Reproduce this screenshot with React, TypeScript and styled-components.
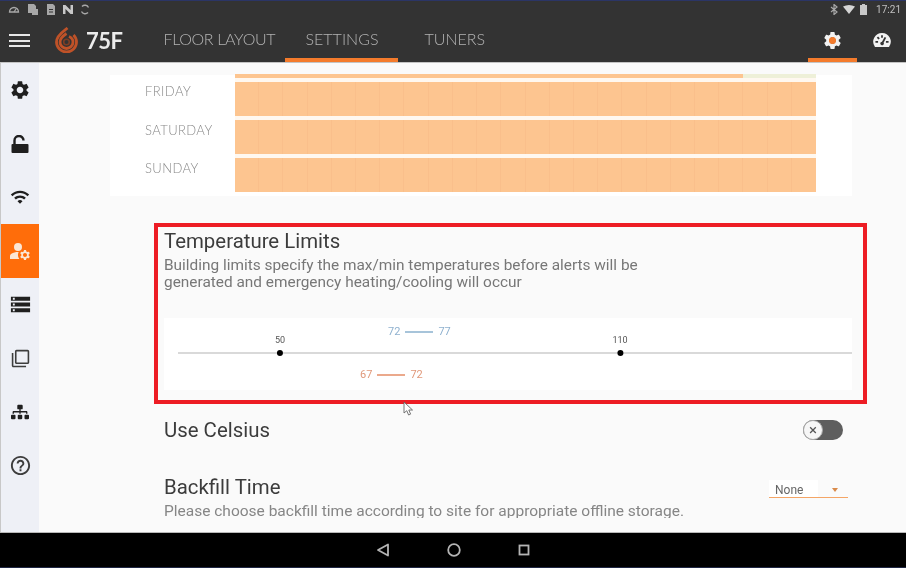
import styled, { createGlobalStyle } from 'styled-components';
import {
    MdSettings,
    MdWifi,
    MdManageAccounts,
    MdStorage,
    MdFilterNone,
    MdHelpOutline,
} from 'react-icons/md';
import { FaSitemap } from 'react-icons/fa';

const GlobalStyle = createGlobalStyle`
    html, body {
        margin: 0;
        padding: 0;
        background: #fafafa;
    }
    * {
        box-sizing: border-box;
    }
`;

const hours = Array.from({ length: 24 }, (_, i) => i);

function HourGrid() {
    return (
        <>
            {hours.map(h => <HourCell key={h} />)}
        </>
    );
}

function StatusIcons() {
    return (
        <StatusLeft>
            <svg width="12" height="10" viewBox="0 0 12 10" fill="none" stroke="#a8a8a8" strokeWidth="1.3">
                <path d="M1.5 8a4.5 4.5 0 1 1 9 0z" />
                <path d="M6 8l2-3" />
            </svg>
            <svg width="12" height="11" viewBox="0 0 12 11" fill="#a8a8a8">
                <path d="M1 0h6l2 2v3h2v6H5V9H1z" />
            </svg>
            <svg width="10" height="11" viewBox="0 0 10 11" fill="#a8a8a8">
                <path d="M1 0h6l2 2v9H1zM3 5v1h4V5zM3 7.500v1h4v-1z" fillRule="evenodd" />
            </svg>
            <svg width="10" height="9" viewBox="0 0 10 9" fill="#c8c8c8">
                <path d="M0 0h2.500l5 5V0H10v9H7.500l-5-5v5H0z" />
            </svg>
            <svg width="10" height="11" viewBox="0 0 10 11" fill="none" stroke="#a8a8a8" strokeWidth="1.4">
                <path d="M8.500 3.500A4 4 0 0 0 2 2.500M1.500 7.500A4 4 0 0 0 8 8.500" />
            </svg>
        </StatusLeft>
    );
}

function Logo() {
    return (
        <LogoWrap>
            <svg width="23" height="26" viewBox="0 0 23 26" fill="none" stroke="#bf5228">
                <path d="M12.500 1C9 4 1.500 8 1.500 15a10 10 0 0 0 20 0c0-3-1-5-3-7" strokeWidth="2.800" />
                <path d="M11.500 6.500C8.500 8.500 5 11 5 15a6.500 6.500 0 0 0 13 0c0-2.500-1.500-4.500-4-5.500" strokeWidth="2.800" />
                <circle cx="11.500" cy="15" r="2.800" strokeWidth="1.600" stroke="#7d3d24" />
            </svg>
            <LogoText>75F</LogoText>
        </LogoWrap>
    );
}

function Gauge() {
    return (
        <svg width="18" height="14" viewBox="0 0 20 16">
            <path
                d="M10 0a10 10 0 0 0-8 16h16A10 10 0 0 0 10 0zM9 2.500h2v3H9zM4 5.500l1.500-1.500 2 2L6 7.500zM2.500 9h3v2h-3zM14.500 9h3v2h-3zM13 4.500l1.800 1-3 5.500a2 2 0 1 1-1.800-1z"
                fill="#f2f2f2"
                fillRule="evenodd"
            />
        </svg>
    );
}

function OpenLock() {
    return (
        <svg width="18" height="18" viewBox="0 0 18 18" fill="none">
            <path d="M3.500 9V5.500a4.500 4.500 0 0 1 9 0" stroke="#1f1f1f" strokeWidth="2.400" />
            <rect x="0.500" y="9" width="17" height="9" rx="1" fill="#1f1f1f" />
        </svg>
    );
}

function App() {
    return (
        <Screen>
            <GlobalStyle />
            <StatusBar>
                <StatusIcons />
                <StatusRight>
                    <svg width="8" height="11" viewBox="0 0 8 11" fill="none" stroke="#a8a8a8" strokeWidth="1.200">
                        <path d="M1 3l6 5-3 2.500V.5L7 3 1 8" />
                    </svg>
                    <svg width="12" height="9" viewBox="0 0 12 9" fill="#d5d5d5">
                        <path d="M0 1.500Q6-1.500 12 1.500L6 9z" />
                    </svg>
                    <svg width="7" height="11" viewBox="0 0 7 11" fill="#c8c8c8">
                        <path d="M2 0h3v1h2v10H0V1h2z" />
                    </svg>
                    <Clock>17:21</Clock>
                </StatusRight>
            </StatusBar>

            <TopNav>
                <Hamburger>
                    <span />
                    <span />
                    <span />
                </Hamburger>
                <Logo />
                <Tabs>
                    <Tab $width={122} $tight>FLOOR LAYOUT</Tab>
                    <Tab $width={113} $active>SETTINGS</Tab>
                    <Tab $width={112} $offset={12}>TUNERS</Tab>
                </Tabs>
                <NavIcons>
                    <NavIcon $active>
                        <MdSettings size={21} color="#f2f2f2" />
                        <GearDot />
                    </NavIcon>
                    <NavIcon>
                        <Gauge />
                    </NavIcon>
                </NavIcons>
            </TopNav>

            <Body>
                <SideBar>
                    <SideItem><MdSettings size={22} /></SideItem>
                    <SideItem><OpenLock /></SideItem>
                    <SideItem><MdWifi size={20} /></SideItem>
                    <SideItem $active><MdManageAccounts size={24} /></SideItem>
                    <SideItem><MdStorage size={23} /></SideItem>
                    <SideItem $muted><MdFilterNone size={19} /></SideItem>
                    <SideItem><FaSitemap size={18} /></SideItem>
                    <SideItem $muted><MdHelpOutline size={23} /></SideItem>
                </SideBar>

                <Main>
                    <ScheduleCard>
                        <DayLabels>
                            <DayLabel>FRIDAY</DayLabel>
                            <DayLabel>SATURDAY</DayLabel>
                            <DayLabel>SUNDAY</DayLabel>
                        </DayLabels>
                        <Chart>
                            <PartialBar>
                                <PartialFill />
                            </PartialBar>
                            <Gap />
                            <DayBar><HourGrid /></DayBar>
                            <Gap />
                            <DayBar><HourGrid /></DayBar>
                            <Gap />
                            <DayBar><HourGrid /></DayBar>
                        </Chart>
                    </ScheduleCard>

                    <Section>
                        <Title>Temperature Limits</Title>
                        <Description>
                            Building limits specify the max/min temperatures before alerts will be<br />
                            generated and emergency heating/cooling will occur
                        </Description>
                        <SliderCard>
                            <RangeLabel $color="#8fb1cf" $left={224} $top={7}>
                                72<RangeDash $color="#a7c4da" />77
                            </RangeLabel>
                            <SliderMark $left={116}>50</SliderMark>
                            <SliderMark $left={456}>110</SliderMark>
                            <SliderTrack />
                            <RangeLabel $color="#e0987a" $left={196} $top={50}>
                                67<RangeDash $color="#eba98c" />72
                            </RangeLabel>
                        </SliderCard>

                        <CelsiusRow>
                            <Title>Use Celsius</Title>
                            <Toggle>
                                <ToggleKnob>×</ToggleKnob>
                            </Toggle>
                        </CelsiusRow>

                        <BackfillRow>
                            <Title>Backfill Time</Title>
                            <Select>
                                <span>None</span>
                                <SelectCaret />
                            </Select>
                        </BackfillRow>
                        <BackfillHint>Please choose backfill time according to site for appropriate offline storage.</BackfillHint>
                    </Section>
                </Main>
            </Body>

            <BottomBar>
                <svg width="14" height="14" viewBox="0 0 14 14" fill="none" stroke="#b4b4b4" strokeWidth="1.800">
                    <path d="M12 1.500v11L2 7z" strokeLinejoin="round" />
                </svg>
                <svg width="14" height="14" viewBox="0 0 14 14" fill="none" stroke="#b4b4b4" strokeWidth="1.800">
                    <circle cx="7" cy="7" r="5.800" />
                </svg>
                <svg width="12" height="12" viewBox="0 0 12 12" fill="none" stroke="#b4b4b4" strokeWidth="1.800">
                    <rect x="1.500" y="1.500" width="9" height="9" />
                </svg>
            </BottomBar>

            <Highlight />
            <Cursor>
                <svg width="12" height="16" viewBox="0 0 12 16" fill="#fff" stroke="#666" strokeWidth="0.900">
                    <path d="M1 1v11l2.800-2.300 1.800 4.300 2-.9L5.800 9H9.500z" />
                </svg>
            </Cursor>
        </Screen>
    );
}

// the reference is a video frame, so everything is a little soft
const Screen = styled.div`
    position: relative;
    width: 906px;
    height: 568px;
    display: flex;
    flex-direction: column;
    overflow: hidden;
    background: #fafafa;
    font-family: Roboto, "Liberation Sans", sans-serif;
    filter: blur(0.4px);
`;

const StatusBar = styled.div`
    height: 22px;
    flex: none;
    display: flex;
    align-items: center;
    justify-content: space-between;
    padding: 0 5px 5px 8px;
    background: #333333;
    border-top: 1px solid #2b3566;
`;

const StatusLeft = styled.div`
    display: flex;
    align-items: center;
    gap: 7px;
`;

const StatusRight = styled.div`
    display: flex;
    align-items: center;
    gap: 5px;
`;

const Clock = styled.span`
    margin-left: 4px;
    font-size: 10px;
    color: #c0c0c0;
`;

const TopNav = styled.div`
    height: 41px;
    flex: none;
    display: flex;
    background: #333333;
    border-bottom: 1px solid #c4c4c4;
`;

const Hamburger = styled.div`
    width: 21px;
    height: 13px;
    margin: 12px 0 0 9px;
    display: flex;
    flex-direction: column;
    justify-content: space-between;

    span {
        display: block;
        height: 2px;
        background: #e8e8e8;
    }
`;

const LogoWrap = styled.div`
    display: flex;
    align-items: center;
    gap: 8px;
    height: 36px;
    margin-left: 25px;
`;

const LogoText = styled.span`
    font-family: Lato, sans-serif;
    font-size: 22px;
    font-weight: 700;
    letter-spacing: -0.5px;
    color: #ececec;
`;

const Tabs = styled.div`
    display: flex;
    margin-left: 41px;
`;

const Tab = styled.div<{ $width: number; $active?: boolean; $offset?: number; $tight?: boolean }>`
    width: ${props => props.$width}px;
    height: 40px;
    margin-left: ${props => props.$offset ?? 0}px;
    padding-top: 7px;
    padding-left: ${props => (props.$offset ? '14px' : '0')};
    text-align: ${props => (props.$active ? 'center' : 'left')};
    font-family: Lato, sans-serif;
    font-size: 16px;
    font-weight: 300;
    letter-spacing: ${props => (props.$tight ? '-0.35px' : '0')};
    white-space: nowrap;
    color: #b4b4b4;
    border-bottom: 4px solid ${props => (props.$active ? '#f47b2c' : 'transparent')};
`;

const NavIcons = styled.div`
    display: flex;
    margin-left: auto;
`;

const NavIcon = styled.div<{ $active?: boolean }>`
    position: relative;
    width: 49px;
    height: 40px;
    display: flex;
    align-items: center;
    justify-content: center;
    border-bottom: 4px solid ${props => (props.$active ? '#f47b2c' : 'transparent')};
`;

const GearDot = styled.span`
    position: absolute;
    left: 21px;
    top: 14.500px;
    width: 7px;
    height: 7px;
    border-radius: 50%;
    background: #f47b2c;
`;

const Body = styled.div`
    flex: 1;
    min-height: 0;
    display: flex;
`;

const SideBar = styled.div`
    width: 39px;
    flex: none;
    display: grid;
    grid-auto-rows: 53.7px;
    align-content: start;
    background: #eef0f6;
    border-left: 1px solid #c8c8c8;
`;

const SideItem = styled.div<{ $active?: boolean; $muted?: boolean }>`
    display: flex;
    align-items: center;
    justify-content: center;
    background: ${props => (props.$active ? '#ff6d0a' : 'transparent')};
    color: ${props => (props.$active ? '#fbe6d4' : props.$muted ? '#3d3d3d' : '#1f1f1f')};
`;

const Main = styled.div`
    flex: 1;
    min-width: 0;
    padding-top: 12px;
    overflow: hidden;
`;

const ScheduleCard = styled.div`
    width: 742px;
    height: 121px;
    margin-left: 71px;
    display: flex;
    background: #ffffff;
`;

const DayLabels = styled.div`
    width: 125px;
    flex: none;
    padding: 8px 0 0 35px;
`;

const DayLabel = styled.div`
    height: 38.5px;
    font-family: Lato, sans-serif;
    font-size: 13px;
    font-weight: 300;
    letter-spacing: 0.4px;
    line-height: 17px;
    color: #8a8a8a;
    white-space: nowrap;
`;

const Chart = styled.div`
    width: 581px;
    margin-top: -1px;
    display: flex;
    flex-direction: column;
`;

const PartialBar = styled.div`
    height: 4px;
    flex: none;
    background: #eef0d8;
`;

const PartialFill = styled.div`
    width: 508px;
    height: 100%;
    background: #fdc590;
`;

const Gap = styled.div`
    height: 4px;
    flex: none;
    background: #fff8f0;
`;

const DayBar = styled.div`
    height: 34px;
    flex: none;
    display: grid;
    grid-template-columns: repeat(24, 1fr);
    background: #fdc590;
`;

const HourCell = styled.div`
    border-right: 1px solid #fabf8b;

    &:last-child {
        border-right: 0;
    }
`;

const Section = styled.div`
    margin: 33px 54px 0 125px;
`;

const Title = styled.div`
    font-size: 20.400px;
    line-height: 24px;
    color: #3c3c3c;
`;

const Description = styled.div`
    margin-top: 4px;
    font-size: 15.400px;
    line-height: 17px;
    white-space: nowrap;
    color: #777777;
`;

const SliderCard = styled.div`
    position: relative;
    height: 72px;
    margin-top: 27px;
    padding: 34px 0 0 14px;
    background: #ffffff;
`;

const SliderTrack = styled.div`
    height: 2px;
    background: #d9d9d9;
`;

const SliderMark = styled.div<{ $left: number }>`
    position: absolute;
    left: ${props => props.$left}px;
    top: 17px;
    font-size: 9px;
    line-height: 11px;
    color: #555555;
    transform: translateX(-50%);

    &::after {
        content: '';
        position: absolute;
        left: 50%;
        top: 15px;
        width: 6px;
        height: 6px;
        margin-left: -3px;
        border-radius: 50%;
        background: #000000;
    }
`;

const RangeLabel = styled.div<{ $color: string; $left: number; $top: number }>`
    position: absolute;
    left: ${props => props.$left}px;
    top: ${props => props.$top}px;
    display: flex;
    align-items: center;
    font-size: 11px;
    line-height: 13px;
    color: ${props => props.$color};
`;

const RangeDash = styled.span<{ $color: string }>`
    width: 28px;
    height: 2px;
    margin: 0 5px;
    background: ${props => props.$color};
`;

const CelsiusRow = styled.div`
    display: flex;
    align-items: center;
    justify-content: space-between;
    height: 24px;
    margin-top: 28px;
    padding-right: 9px;
`;

const Toggle = styled.div`
    width: 40px;
    height: 20px;
    border-radius: 10px;
    background: #5e5e5e;
`;

const ToggleKnob = styled.div`
    width: 20px;
    height: 20px;
    border-radius: 50%;
    background: #f6f6f6;
    border: 1px solid #a8a8a8;
    display: flex;
    align-items: center;
    justify-content: center;
    font-size: 15px;
    line-height: 1;
    color: #555555;
`;

const BackfillRow = styled.div`
    display: flex;
    align-items: flex-start;
    justify-content: space-between;
    height: 24px;
    margin-top: 33px;
    padding-right: 4px;
`;

const Select = styled.div`
    width: 79px;
    height: 18px;
    margin-top: 5px;
    padding: 2px 0 0 6px;
    display: flex;
    align-items: center;
    justify-content: space-between;
    font-size: 12px;
    color: #666666;
    background: linear-gradient(90deg, #ffffff 0 62%, transparent 62%);
    border-bottom: 1px solid #f4a566;
`;

const SelectCaret = styled.span`
    width: 0;
    height: 0;
    margin-right: 10px;
    border-left: 3.500px solid transparent;
    border-right: 3.500px solid transparent;
    border-top: 4px solid #d98a4a;
`;

// the text is cut off at the bottom in the reference
const BackfillHint = styled.div`
    height: 15px;
    overflow: hidden;
    margin-top: 4px;
    font-size: 15.500px;
    line-height: 17px;
    color: #868686;
    white-space: nowrap;
`;

const BottomBar = styled.div`
    height: 36px;
    flex: none;
    display: flex;
    align-items: center;
    justify-content: center;
    gap: 57px;
    padding-right: 1px;
    background: #000000;
    border-top: 1px solid #b8b8b8;
    border-bottom: 1px solid #1f2744;
`;

const Highlight = styled.div`
    position: absolute;
    left: 154px;
    top: 223px;
    width: 713px;
    height: 181px;
    border: 4px solid #ed1c24;
    pointer-events: none;
`;

const Cursor = styled.div`
    position: absolute;
    left: 403px;
    top: 401px;
    line-height: 0;
`;

export default App;
